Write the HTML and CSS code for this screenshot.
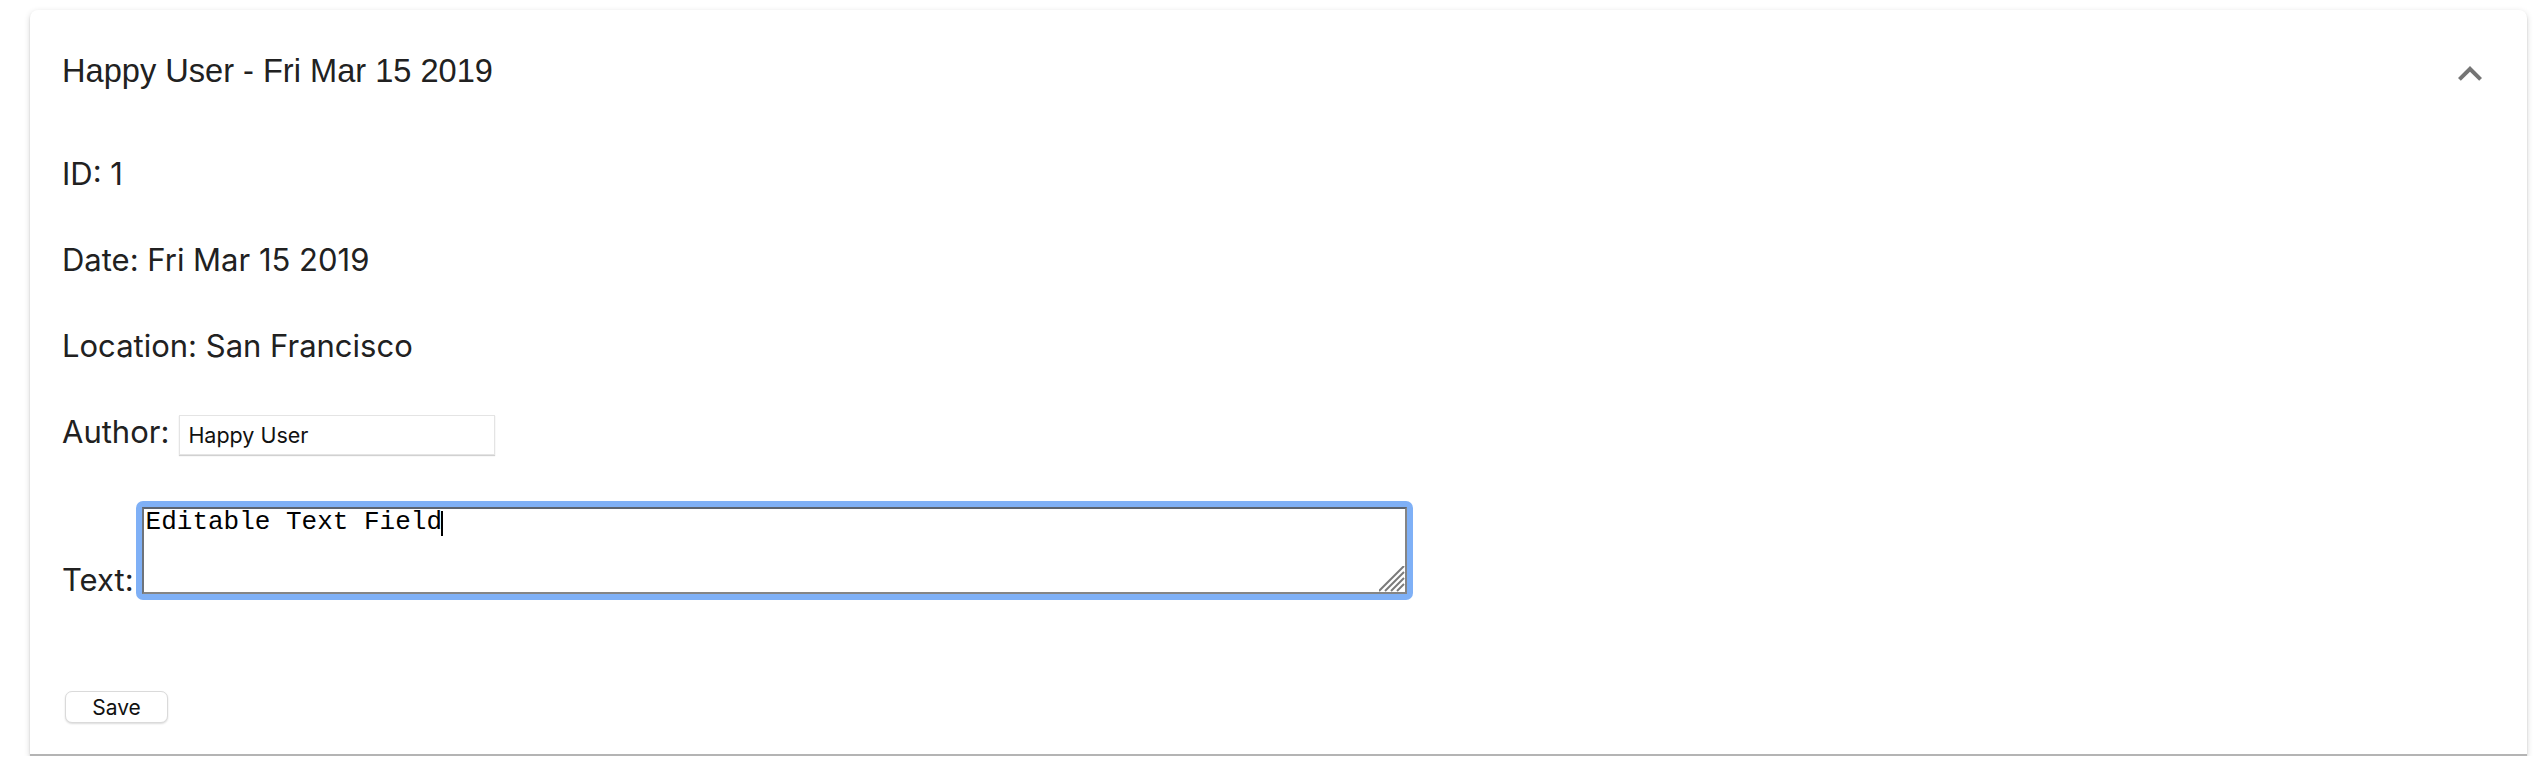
FILE: index.html
```html
<!DOCTYPE html>
<html lang="en">
<head>
<meta charset="utf-8">
<title>Panel</title>
<link rel="stylesheet" href="styles.css">
</head>
<body>
<div class="panel">
  <div class="summary">
    <div class="title">Happy User - Fri Mar 15 2019</div>
    <span class="expand-icon">
      <svg viewBox="0 0 24 24" width="48" height="48"><path d="M12 8l-6 6 1.41 1.41L12 10.83l4.59 4.58L18 14z"/></svg>
    </span>
  </div>
  <div class="details">
    <p class="field">ID: 1</p>
    <p class="field">Date: Fri Mar 15 2019</p>
    <p class="field">Location: San Francisco</p>
    <div class="field author-row">
      <label class="label" for="author">Author:</label>
      <input id="author" class="author-input" type="text" value="Happy User">
    </div>
    <div class="text-row">
      <label class="label" for="text">Text:</label>
      <div class="ring">
        <textarea id="text" class="text-area">Editable Text Field</textarea>
        <span class="caret"></span>
        <svg class="grip" viewBox="0 0 26 26" width="26" height="26">
          <line x1="0" y1="25" x2="25" y2="0"/>
          <line x1="6" y1="25" x2="25" y2="6"/>
          <line x1="12" y1="25" x2="25" y2="12"/>
          <line x1="18" y1="25" x2="25" y2="18"/>
        </svg>
      </div>
    </div>
    <div class="actions">
      <button class="save" type="button">Save</button>
    </div>
  </div>
</div>
</body>
</html>
```

FILE: styles.css
```css
html, body {
  margin: 0;
  padding: 0;
  background: #ffffff;
}

body {
  padding: 10px 13px 0 30px;
  font-family: Inter, "Noto Sans", sans-serif;
  color: #212121;
}

.panel {
  background: #ffffff;
  border-radius: 8px 8px 0 0;
  border-bottom: 2px solid #b4b4b4;
  box-shadow: 0 2px 6px rgba(0, 0, 0, 0.16), 0 2px 2px rgba(0, 0, 0, 0.14);
  height: 746px;
  box-sizing: border-box;
}

.summary {
  display: flex;
  align-items: center;
  height: 122px;
  padding: 0 33px 0 32px;
}

.title {
  flex: 1;
  font-family: "Liberation Sans", Arial, sans-serif;
  font-size: 32.6px;
  line-height: 48px;
  color: #212121;
}

.expand-icon {
  display: flex;
  width: 48px;
  height: 48px;
  margin-top: 5px;
  fill: #757575;
}

.details {
  display: flex;
  flex-direction: column;
  gap: 46px;
  padding: 22px 32px 0 32px;
}

.field {
  margin: 0;
  font-size: 31px;
  line-height: 40px;
}

.author-row {
  display: flex;
  align-items: baseline;
  gap: 10px;
}

.label {
  font-size: 31px;
  line-height: 40px;
}

.author-input {
  width: 316px;
  height: 40px;
  box-sizing: border-box;
  border: 1px solid #e4e4e4;
  box-shadow: 0 1px 1px rgba(0, 0, 0, 0.18);
  padding: 0 8px;
  font-family: Inter, "Noto Sans", sans-serif;
  font-size: 21.5px;
  color: #111;
  background: #fff;
  outline: none;
}

.text-row {
  display: flex;
  align-items: flex-end;
  gap: 2px;
}

.ring {
  position: relative;
  display: flex;
  padding: 6px;
  background: #7fb0f6;
  border-radius: 7px;
}

.text-area {
  width: 1265px;
  height: 87px;
  box-sizing: border-box;
  margin: 0;
  border: 2px solid #858585;
  border-top-color: #5c6470;
  border-left-color: #6e737a;
  padding: 0 2px;
  font-family: "Liberation Mono", "Courier New", monospace;
  font-size: 26px;
  line-height: 26px;
  color: #000;
  background: #fff;
  resize: none;
  outline: none;
}

.caret {
  position: absolute;
  left: 305px;
  top: 10px;
  width: 2px;
  height: 25px;
  background: #000;
}

.grip {
  position: absolute;
  right: 8px;
  bottom: 8px;
  stroke: #7a7a7a;
  stroke-width: 2;
}

.actions {
  margin-top: 45px;
  padding-left: 3px;
}

.save {
  width: 103px;
  height: 32px;
  box-sizing: border-box;
  border: 1px solid #dadada;
  border-radius: 7px;
  background: #fff;
  box-shadow: 0 1px 2px rgba(0, 0, 0, 0.14);
  font-family: Inter, "Noto Sans", sans-serif;
  font-size: 21px;
  color: #111;
  padding: 0;
}
```
